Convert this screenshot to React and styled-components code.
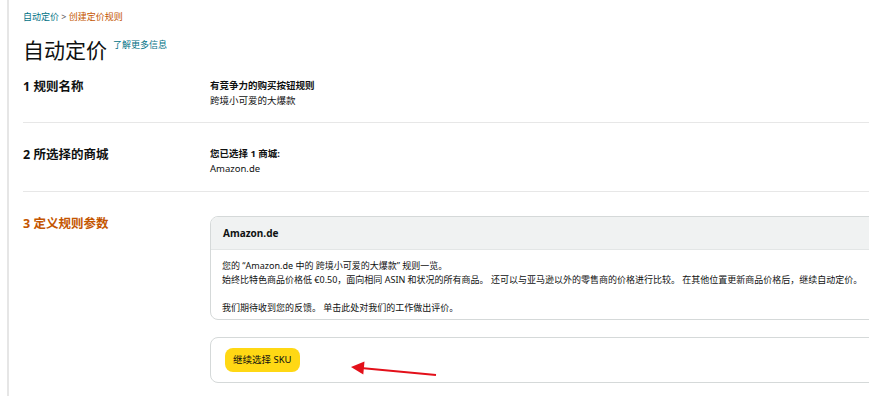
import React from "react";
import styled, { createGlobalStyle } from "styled-components";

const GlobalStyle = createGlobalStyle`
  html, body {
    margin: 0;
    padding: 0;
    background: #ffffff;
    overflow: hidden;
  }
  body {
    font-family: "Noto Sans", "Noto Sans CJK SC", sans-serif;
    color: #0f1111;
  }
`;

const Frame = styled.div`
  margin-left: 7px;
  border-left: 2px solid #e6e6e6;
  padding-left: 14px;
  min-height: 396px;
  width: 900px;
  box-sizing: border-box;
`;

const Crumbs = styled.div`
  padding-top: 10px;
  font-size: 9px;
  line-height: 14px;
  color: #555;
`;

const CrumbLink = styled.span`
  color: ${(p) => (p.$current ? "#c45500" : "#007185")};
`;

const TitleRow = styled.div`
  display: flex;
  align-items: flex-start;
  gap: 6px;
  margin-top: 12px;
`;

const Title = styled.h1`
  margin: 0;
  font-size: 21px;
  line-height: 28px;
  font-weight: 400;
`;

const MoreLink = styled.a`
  margin-top: 2px;
  font-size: 9px;
  line-height: 14px;
  color: #007185;
  text-decoration: none;
`;

const Section = styled.section`
  display: grid;
  grid-template-columns: 187px 1fr;
  padding: ${(p) => p.$pad};
  border-bottom: ${(p) => (p.$last ? "none" : "1px solid #e7e7e7")};
`;

const Label = styled.h2`
  margin: 0;
  font-size: 12.5px;
  line-height: 18px;
  font-weight: 700;
  color: ${(p) => (p.$active ? "#c45500" : "#0f1111")};
`;

const Info = styled.div`
  font-size: 9.5px;
  line-height: 15px;
`;

const InfoStrong = styled.div`
  font-weight: 700;
`;

const Column = styled.div`
  display: flex;
  flex-direction: column;
  gap: 17px;
  padding-top: 1px;
`;

const Card = styled.div`
  position: relative;
  border: 1px solid #d5d9d9;
  border-radius: 8px;
  background: #fff;
  overflow: hidden;
`;

const CardHeader = styled.div`
  height: 33px;
  display: flex;
  align-items: center;
  padding: 0 12px;
  background: #f0f2f2;
  border-bottom: 1px solid #e3e6e6;
  font-size: 10px;
  font-weight: 700;
  box-sizing: border-box;
`;

const CardBody = styled.div`
  padding: 9px 11px 4px;
  font-size: 9px;
  line-height: 14px;
`;

const Para = styled.p`
  margin: 0 0 ${(p) => (p.$gap ? "14px" : "0")};
`;

const ActionBody = styled.div`
  padding: 10px 14px;
`;

const PrimaryButton = styled.button`
  display: block;
  height: 24px;
  padding: 0 8px;
  border: none;
  border-radius: 8px;
  background: #ffd814;
  color: #0f1111;
  font-family: inherit;
  font-size: 9.5px;
  line-height: 24px;
  cursor: pointer;
`;

const Arrow = styled.svg`
  position: absolute;
  left: 130px;
  top: 17px;
`;

export default function App() {
  return (
    <>
      <GlobalStyle />
      <Frame>
        <Crumbs>
          <CrumbLink>自动定价</CrumbLink> &gt; <CrumbLink $current>创建定价规则</CrumbLink>
        </Crumbs>
        <TitleRow>
          <Title>自动定价</Title>
          <MoreLink href="#">了解更多信息</MoreLink>
        </TitleRow>

        <Section $pad="14px 0 14px">
          <Label>1 规则名称</Label>
          <Info>
            <InfoStrong>有竞争力的购买按钮规则</InfoStrong>
            <div>跨境小可爱的大爆款</div>
          </Info>
        </Section>

        <Section $pad="23px 0 15px">
          <Label>2 所选择的商城</Label>
          <Info>
            <InfoStrong>您已选择 1 商城:</InfoStrong>
            <div>Amazon.de</div>
          </Info>
        </Section>

        <Section $pad="23px 0 14px" $last>
          <Label $active>3 定义规则参数</Label>
          <Column>
            <Card>
              <CardHeader>Amazon.de</CardHeader>
              <CardBody>
                <Para>您的 “Amazon.de 中的 跨境小可爱的大爆款” 规则一览。</Para>
                <Para $gap>
                  始终比特色商品价格低 €0.50，面向相同 ASIN 和状况的所有商品。 还可以与亚马逊以外的零售商的价格进行比较。 在其他位置更新商品价格后，继续自动定价。
                </Para>
                <Para>我们期待收到您的反馈。 单击此处对我们的工作做出评价。</Para>
              </CardBody>
            </Card>
            <Card>
              <ActionBody>
                <PrimaryButton>继续选择 SKU</PrimaryButton>
              </ActionBody>
              <Arrow width="110" height="30" viewBox="0 0 110 30">
                <line x1="20" y1="13" x2="95" y2="20" stroke="#e3101a" strokeWidth="2" />
                <polygon points="10,12 23.5,6.5 22.3,19.5" fill="#e3101a" />
              </Arrow>
            </Card>
          </Column>
        </Section>
      </Frame>
    </>
  );
}
